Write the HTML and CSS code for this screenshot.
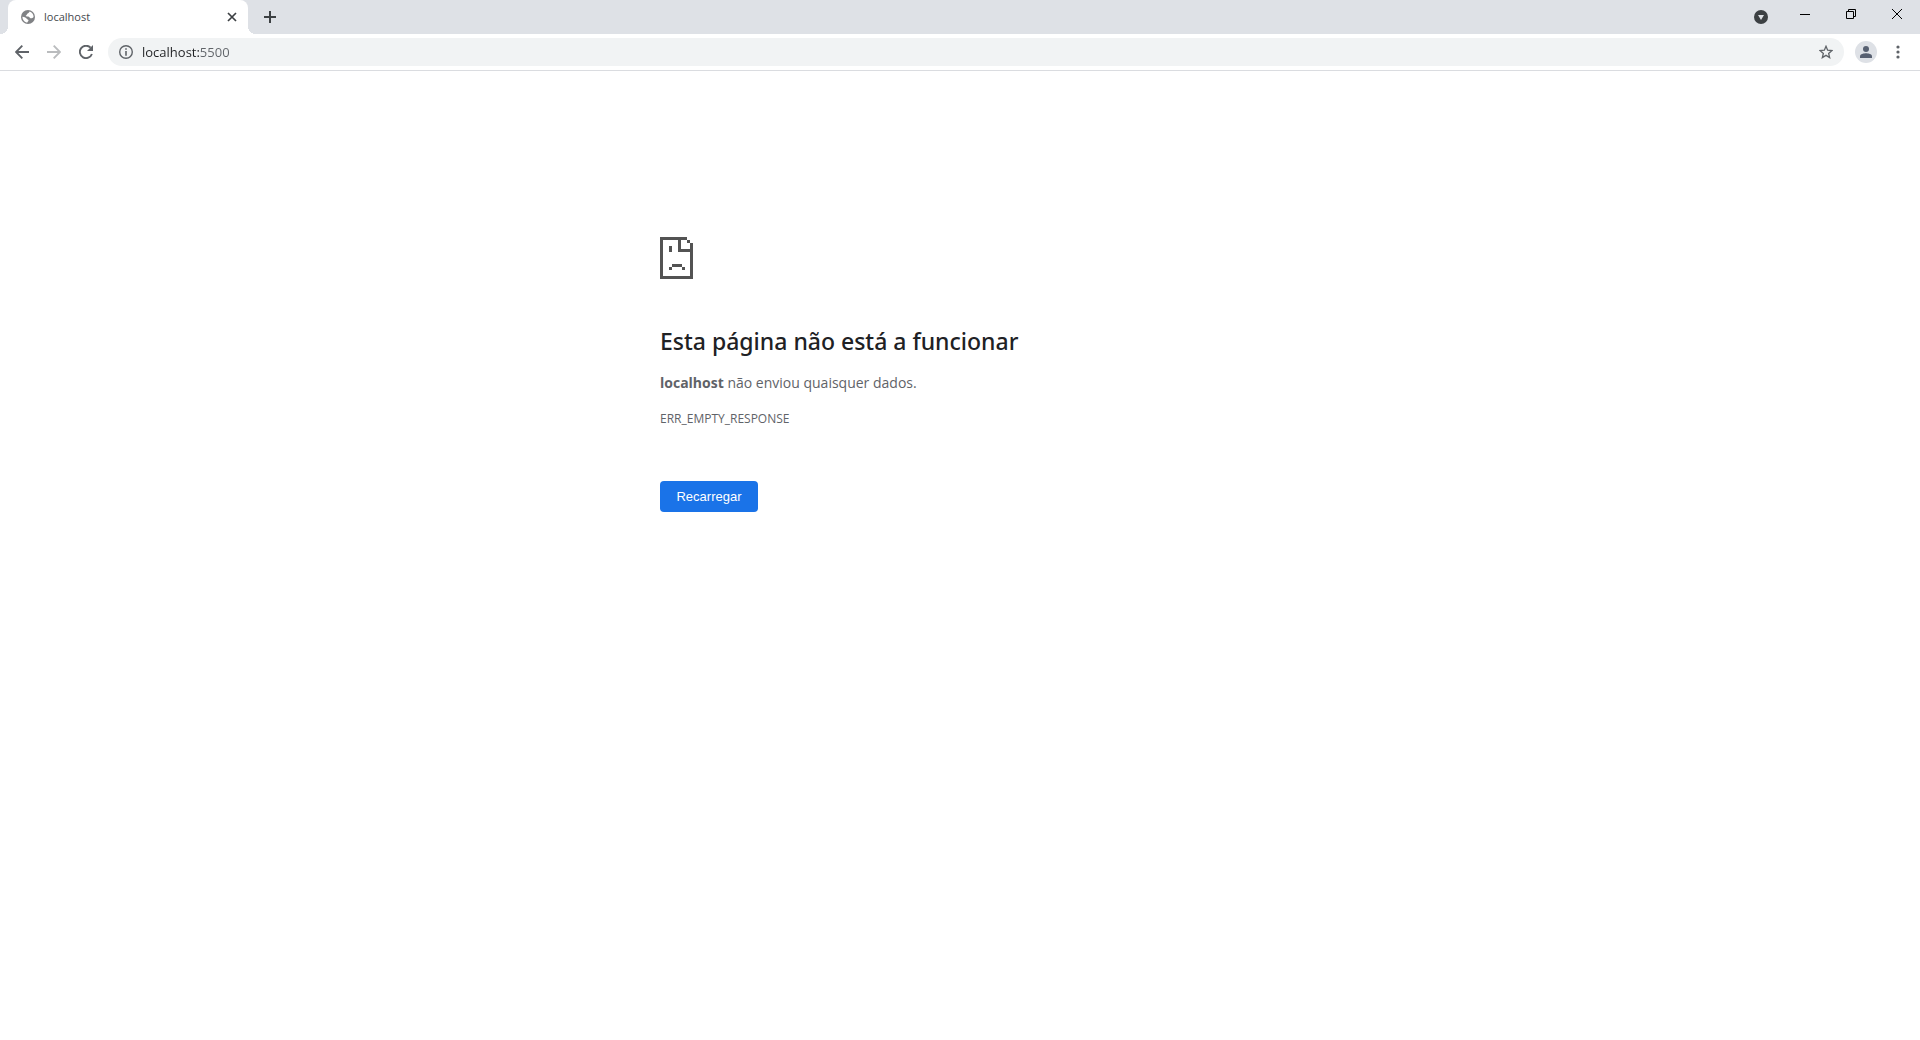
FILE: index.html
```html
<!DOCTYPE html>
<html lang="pt">
<head>
<meta charset="utf-8">
<title>localhost</title>
<link rel="stylesheet" href="styles.css">
</head>
<body>
<header class="browser">
  <div class="tab-strip">
    <div class="tab">
      <svg class="icon" viewBox="0 0 14 14"><circle cx="7" cy="7" r="7" fill="#808285"/><path d="M8.600 1.600C8 2.400 7.600 3.400 6.300 3.800 5.700 4.400 6 5.400 4.800 5.600 4.700 6.400 5.400 6.600 7 6.600 8.500 6.600 8.600 8.200 9.600 8.300 11 8.300 12 7.800 12.600 7 12.600 4.200 10.900 2.200 8.600 1.600zM1.400 6.700C1.400 9.700 3.600 12.300 6.400 12.600 6.300 11.700 7.600 11.300 7.500 10.300 7.400 9.400 6 9.600 5.500 8.600 5.100 7.600 3.800 7 1.400 6.700z" fill="#fff"/></svg>
      <span class="tab-title">localhost</span>
      <button class="icon-button" aria-label="Fechar separador"><svg class="icon" viewBox="0 0 14 14"><path d="m3 3 8 8M11 3l-8 8" stroke="#3c4043" stroke-width="1.700"/></svg></button>
    </div>
    <button class="icon-button new-tab" aria-label="Novo separador"><svg class="icon" viewBox="0 0 14 14"><path d="M7 1v12M1 7h12" stroke="#3c4043" stroke-width="2"/></svg></button>
    <div class="window-controls">
      <button class="icon-button search-tabs" aria-label="Pesquisar separadores"><svg class="icon" viewBox="0 0 14 14"><circle cx="7" cy="7" r="7" fill="#3c4043"/><path d="M4 5h6L7 10z" fill="#dee1e6"/></svg></button>
      <button class="window-button" aria-label="Minimizar"><svg class="glyph" viewBox="0 0 10 10"><path d="M0 5h10v1H0z"/></svg></button>
      <button class="window-button" aria-label="Restaurar"><svg class="glyph" viewBox="0 0 10 10"><path d="M.5 2.5h7v7h-7zM2.5 2.5v-2h7v7h-2" fill="none" stroke="#000"/></svg></button>
      <button class="window-button" aria-label="Fechar"><svg class="glyph" viewBox="0 0 10 10"><path d="m0 0 10 10M10 0 0 10" stroke="#000"/></svg></button>
    </div>
  </div>
  <div class="toolbar">
    <nav class="nav-buttons">
      <button class="icon-button" aria-label="Anterior"><svg class="icon" viewBox="0 0 14 14"><path d="M14 7H1.5M7.3.7 1 7l6.300 6.300" fill="none" stroke="#5f6368" stroke-width="1.900"/></svg></button>
      <button class="icon-button" aria-label="Seguinte" disabled><svg class="icon" viewBox="0 0 14 14"><path d="M0 7h12.500M6.700.7 13 7l-6.300 6.300" fill="none" stroke="#babcbe" stroke-width="1.900"/></svg></button>
      <button class="icon-button" aria-label="Recarregar"><svg class="icon" viewBox="0 0 14 14"><path d="M12.900 9A6.200 6.200 0 1 1 11.600 2.700" fill="none" stroke="#5f6368" stroke-width="1.900"/><path d="M14 0v6H8z" fill="#5f6368"/></svg></button>
    </nav>
    <label class="omnibox">
      <svg class="icon" viewBox="0 0 14 14"><circle cx="7" cy="7" r="6.300" fill="none" stroke="#5f6368" stroke-width="1.400"/><path d="M6.200 3.200h1.600v1.600H6.200zM6.200 6h1.600v4.800H6.200z" fill="#5f6368"/></svg>
      <input class="address" type="text" value="localhost:5500" aria-label="Endereço">
      <svg class="icon" viewBox="0 0 14 14"><path d="m7 1.300 1.650 3.950 4.250.35-3.250 2.800 1 4.150L7 10.350l-3.650 2.200 1-4.150L1.100 5.600l4.250-.35z" fill="none" stroke="#5f6368" stroke-width="1.300"/></svg>
    </label>
    <button class="avatar" aria-label="Perfil"><svg class="icon" viewBox="0 0 14 14"><circle cx="7" cy="4" r="3" fill="#576071"/><path d="M1 13v-1.800C1 9 5 8.200 7 8.200s6 .8 6 3V13z" fill="#576071"/></svg></button>
    <button class="icon-button" aria-label="Menu"><svg class="icon" viewBox="0 0 14 14" fill="#5f6368"><circle cx="7" cy="2" r="1.600"/><circle cx="7" cy="7" r="1.600"/><circle cx="7" cy="12" r="1.600"/></svg></button>
  </div>
</header>
<main class="error">
  <svg class="sad-page" viewBox="0 0 33 42" shape-rendering="crispEdges" fill="#535353"><path d="M0 0h27v3H21v9h12v30H0zM3 3v36h27V15H18V3zM27 3h3v3h-3zM30 6h3v6h-3zM9 9h3v6H9zM12 27h10v3H12zM9 30h3v3H9zM22 30h3v3h-3z" fill-rule="evenodd"/></svg>
  <h1 class="error-title">Esta página não está a funcionar</h1>
  <p class="error-text"><strong>localhost</strong> não enviou quaisquer dados.</p>
  <p class="error-code">ERR_EMPTY_RESPONSE</p>
  <button class="reload">Recarregar</button>
</main>
</body>
</html>
```
FILE: styles.css
```css
* {
  box-sizing: border-box;
}

body {
  margin: 0;
  background: #fff;
  font-family: "Open Sans", "Noto Sans", sans-serif;
}

button {
  padding: 0;
  border: 0;
  background: none;
  color: inherit;
  font: inherit;
}

.icon,
.glyph {
  display: block;
  flex: none;
  width: 14px;
  height: 14px;
}

.glyph {
  width: 10px;
  height: 10px;
}

.icon-button {
  display: grid;
  place-items: center;
  width: 24px;
  height: 24px;
}

.tab-strip {
  display: flex;
  align-items: center;
  height: 34px;
  padding-left: 8px;
  background: #dee1e6;
}

.tab {
  position: relative;
  display: flex;
  align-items: center;
  gap: 9px;
  width: 240px;
  height: 34px;
  padding: 0 4px 0 13px;
  border-radius: 8px 8px 0 0;
  background: #fff;
}

/* Flared feet where the tab meets the toolbar */
.tab::before,
.tab::after {
  content: "";
  position: absolute;
  bottom: 0;
  width: 8px;
  height: 8px;
}

.tab::before {
  right: 100%;
  background: radial-gradient(circle at 0 0, #dee1e6 8px, #fff 8px);
}

.tab::after {
  left: 100%;
  background: radial-gradient(circle at 100% 0, #dee1e6 8px, #fff 8px);
}

.tab-title {
  flex: 1;
  color: #45494d;
  font-size: 11px;
  line-height: 16px;
}

.new-tab {
  margin-left: 10px;
}

.window-controls {
  display: flex;
  align-items: center;
  height: 34px;
  margin-left: auto;
}

.search-tabs {
  margin-right: 9px;
}

.window-button {
  display: grid;
  place-items: center;
  align-self: flex-start;
  width: 46px;
  height: 28px;
}

.toolbar {
  display: flex;
  align-items: center;
  height: 37px;
  padding: 0 10px;
  border-bottom: 1px solid #dadce0;
}

.nav-buttons {
  display: flex;
  gap: 8px;
}

.omnibox {
  display: flex;
  flex: 1;
  align-items: center;
  gap: 9px;
  height: 28px;
  margin: 0 11px 0 10px;
  padding: 0 11px;
  border-radius: 14px;
  background: #f1f3f4;
}

/* The host is dark, the port after it is muted */
.address {
  flex: 1;
  min-width: 0;
  height: 20px;
  padding: 0;
  border: 0;
  outline: 0;
  background: linear-gradient(90deg, #202124 58px, #5f6368 58px);
  background-clip: text;
  color: transparent;
  font: 13px/20px "Open Sans", "Noto Sans", sans-serif;
}

.avatar {
  display: grid;
  place-items: center;
  width: 22px;
  height: 22px;
  margin-right: 9px;
  border-radius: 50%;
  background: #dee1e6;
}

.error {
  width: 100%;
  max-width: 600px;
  margin: 0 auto;
  padding: 166px 0 40px;
  color: #5f6368;
}

.sad-page {
  display: block;
  width: 33px;
  height: 42px;
}

.error-title {
  margin: 46px 0 14px;
  color: #202124;
  font-family: "Noto Sans", "Open Sans", sans-serif;
  font-size: 23px;
  font-weight: 500;
  line-height: 32px;
}

.error-text {
  margin: 0 0 14px;
  font-size: 14px;
  line-height: 24px;
}

.error-code {
  margin: 0 0 52px;
  font-size: 12px;
  line-height: 20px;
}

.reload {
  min-width: 98px;
  height: 31px;
  padding: 0 16px;
  border-radius: 4px;
  background: #1a73e8;
  color: #fff;
  font: 13px/15px "Liberation Sans", Arial, sans-serif;
}
```
